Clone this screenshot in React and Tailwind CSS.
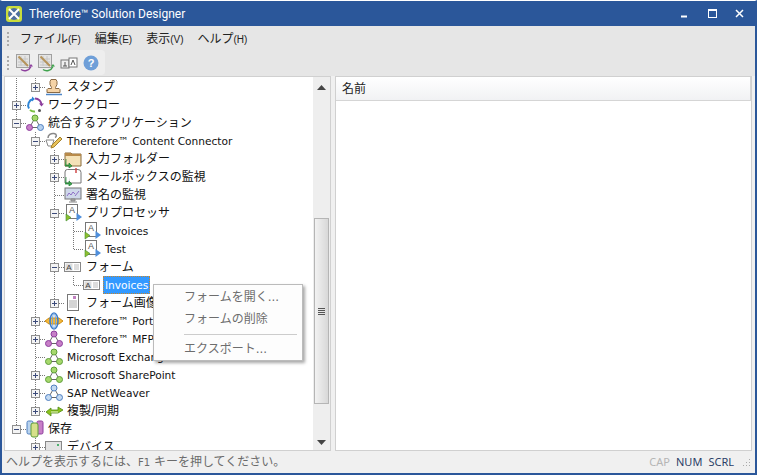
const LATIN = "font-['DejaVu_Sans','Noto_Sans_CJK_JP',sans-serif]";

function Net({ a = '#a6d86c', b = '#5f9e3a', c1, c2 }) {
  const f = c1 || a, s = c2 || b;
  return (
    <svg width="18" height="18" viewBox="0 0 18 18" className="shrink-0">
      <path d="M9 4L3.5 13.5H14.5Z" fill="none" stroke="#666" strokeWidth="1" />
      <circle cx="9" cy="4" r="3" fill={f} stroke={s} />
      <circle cx="3.5" cy="13.5" r="3" fill={f} stroke={s} />
      <circle cx="14.5" cy="13.5" r="3" fill={f} stroke={s} />
    </svg>
  );
}

function IntegrateIcon() {
  return (
    <svg width="18" height="18" viewBox="0 0 18 18" className="shrink-0">
      <path d="M9 4L3.5 13.5H14.5Z" fill="none" stroke="#666" />
      <circle cx="9" cy="4" r="3" fill="#a6d86c" stroke="#5f9e3a" />
      <circle cx="3.5" cy="13.5" r="3" fill="#c77fc7" stroke="#8d3f9d" />
      <circle cx="14.5" cy="13.5" r="3" fill="#b5d0ee" stroke="#4f7fbf" />
    </svg>
  );
}

function Stamp() {
  return (
    <svg width="18" height="18" viewBox="0 0 18 18" className="shrink-0">
      <path d="M6 1.5h5l1 2v3l-1.5 3v1h3.5l1 1v3H2v-3l1-1h3.5v-1L5 6.5v-3Z" fill="#f5d3a6" stroke="#8a6a45" />
      <path d="M1 16.5h16" stroke="#4f86c6" strokeWidth="1.5" />
    </svg>
  );
}

function Workflow() {
  return (
    <svg width="18" height="18" viewBox="0 0 18 18" className="shrink-0" fill="none">
      <path d="M9 2.5A6.5 6.5 0 0 1 15.5 9" stroke="#8d3f9d" strokeWidth="2" />
      <path d="M13 7.5l2.5 3 2.5-3" fill="#8d3f9d" />
      <path d="M3 12.5A6.5 6.5 0 0 1 7 3" stroke="#2f86d6" strokeWidth="2" />
      <path d="M6 .5l3 2.5-3 2.5Z" fill="#2f86d6" />
      <path d="M4 14A6.5 6.5 0 0 0 9 15.5" stroke="#7bc043" strokeWidth="2" />
      <circle cx="13.5" cy="14.5" r="1.5" fill="#555" />
    </svg>
  );
}

function Connector() {
  return (
    <svg width="18" height="18" viewBox="0 0 18 18" className="shrink-0" fill="none">
      <path d="M3 6c0-3 3-5 6-4.500 3 .5 3 3 1 4" stroke="#888" strokeWidth="1.500" />
      <path d="M1 8h8l-2 6H3Z" fill="#fff" stroke="#888" />
      <path d="M7 13l8-8 2 2-8 8-3 1Z" fill="#e8c25a" stroke="#a5822e" />
    </svg>
  );
}

function GreenArrow() {
  return <path d="M2 9v6h3v-2l3 3-3 2v-2H1" fill="#3fa34d" stroke="#1e7d32" strokeWidth=".7" />;
}

function Folder() {
  return (
    <svg width="18" height="18" viewBox="0 0 18 18" className="shrink-0">
      <path d="M1 3h6l1 1h9v12H1Z" fill="#f4e2b8" stroke="#8a6a3a" />
      <path d="M1 3h6l1 1h9v2H1Z" fill="#b88a4a" />
      <GreenArrow />
    </svg>
  );
}

function Mail() {
  return (
    <svg width="18" height="18" viewBox="0 0 18 18" className="shrink-0">
      <path d="M1 4a2.500 2.500 0 0 1 5 0v11H1Z" fill="#fff" stroke="#777" />
      <path d="M3.500 1.500H14a3 3 0 0 1 3 3V15H6" fill="#fff" stroke="#777" />
      <path d="M12 0v5" stroke="#d04a4a" strokeWidth="1.500" />
      <GreenArrow />
    </svg>
  );
}

function Monitor() {
  return (
    <svg width="18" height="18" viewBox="0 0 18 18" className="shrink-0">
      <rect x="1" y="2" width="16" height="11" fill="#cfd8ea" stroke="#777" />
      <path d="M3 10l2-3 2 2 2-3 2 2M11 10l4-5" fill="none" stroke="#8f6fc7" />
      <path d="M7 13h4v2H7ZM5 16h8" fill="#aaa" stroke="#888" />
    </svg>
  );
}

function Process() {
  return (
    <svg width="18" height="18" viewBox="0 0 18 18" className="shrink-0">
      <rect x="2.500" y=".5" width="11" height="14" fill="#fff" stroke="#777" />
      <text x="8" y="9" fontSize="9" fill="#555" textAnchor="middle" fontFamily="Liberation Sans">A</text>
      <path d="M12.500 9l5.500 4-5.500 4Z" fill="#4f8fdc" />
      <path d="M2 10l5 3.500-5 3.500Z" fill="#8fbf2f" stroke="#3f8f2f" strokeWidth=".6" />
    </svg>
  );
}

function FormIcon() {
  return (
    <svg width="18" height="18" viewBox="0 0 18 18" className="shrink-0">
      <rect x=".5" y="4.500" width="16" height="9" fill="#fff" stroke="#888" />
      <rect x="1.500" y="5.500" width="7" height="7" fill="#ddd" />
      <text x="5" y="12" fontSize="8" fill="#444" textAnchor="middle" fontFamily="Liberation Sans">A</text>
      <path d="M10 7h5M10 9h5M10 11h5" stroke="#bbb" />
    </svg>
  );
}

function Page() {
  return (
    <svg width="18" height="18" viewBox="0 0 18 18" className="shrink-0">
      <rect x="3.500" y=".5" width="11" height="16" fill="#fff" stroke="#777" />
      <rect x="9" y="2" width="3" height="3" fill="#c07fc0" />
      <path d="M5 7h8M5 9h8M5 11h8M5 13h8" stroke="#aaa" />
    </svg>
  );
}

function Portal() {
  return (
    <svg width="18" height="18" viewBox="0 0 18 18" className="shrink-0" fill="none">
      <path d="M0 9l4-3h10l4 3-4 3H4Z" fill="#f5b93a" stroke="#cf8d10" />
      <ellipse cx="9" cy="9" rx="4" ry="8" stroke="#3d7cc9" strokeWidth="1.500" />
      <ellipse cx="9" cy="9" rx="1.500" ry="8" stroke="#6fa3dd" />
    </svg>
  );
}

function Sync() {
  return (
    <svg width="18" height="18" viewBox="0 0 18 18" className="shrink-0">
      <path d="M1 10l5-4v2h7V5l5 3-5 3H6v3Z" fill="#8cc21e" stroke="#4f8a10" strokeWidth=".8" />
      <path d="M6 10h7" stroke="#fff" strokeWidth=".8" />
    </svg>
  );
}

function Storage() {
  return (
    <svg width="18" height="18" viewBox="0 0 18 18" className="shrink-0">
      <rect x="1" y="1" width="6" height="13" rx="1.500" fill="#b9d3ee" stroke="#4f7fbf" />
      <rect x="11" y="1" width="6" height="13" rx="1.500" fill="#c77fc7" stroke="#8d3f9d" />
      <rect x="5" y="3" width="7" height="14" rx="2" fill="#d6e08a" stroke="#5f9e3a" />
    </svg>
  );
}

function Device() {
  return (
    <svg width="18" height="18" viewBox="0 0 18 18" className="shrink-0">
      <rect x=".5" y="3.500" width="16" height="13" fill="#e3e3e3" stroke="#888" />
      <rect x="12" y="6" width="2" height="2" fill="#4fb06f" />
    </svg>
  );
}

function ToolEdit({ arc }) {
  return (
    <svg width="18" height="18" viewBox="0 0 18 18" fill="none" className="shrink-0">
      <rect x=".5" y=".5" width="13" height="13" fill="#e4e4e4" stroke="#a0a0a0" />
      <path d="M2 5h10M2 8h10M2 11h10M5 2v10M9 2v10" stroke="#c6c6c6" />
      <path d="M2.500 2.500L12 12" stroke="#b5935a" strokeWidth="2" />
      <path d="M5 15.500c3 2 8 1.500 10-3" stroke={arc} strokeWidth="1.500" />
      <path d="M13 12.500h4l-2 -2.500Z" fill={arc} />
    </svg>
  );
}

function Cell({ through, joint, elbow, box, dashTo = 19 }) {
  return (
    <svg width="19" height="18" viewBox="0 0 19 18" className="shrink-0" shapeRendering="crispEdges">
      {through && <path d="M9.500 0V18" stroke="#777" strokeDasharray="1 1" />}
      {elbow && <path d="M9.500 0V9" stroke="#777" strokeDasharray="1 1" />}
      {(joint || elbow) && <path d={`M9.500 9.500H${dashTo}`} stroke="#777" strokeDasharray="1 1" />}
      {box && (
        <g>
          <rect x="5.500" y="5.500" width="8" height="8" fill="#f4f4f4" stroke="#8f8f8f" />
          <path d="M7 9.500h5" stroke="#3b4a7a" />
          {box === 'plus' && <path d="M9.500 7v5" stroke="#3b4a7a" />}
        </g>
      )}
    </svg>
  );
}

const rows = [
  { t: 'スタンプ', g: [1], k: 'elbow', box: 'plus', I: Stamp },
  { t: 'ワークフロー', g: [], k: 'tee', box: 'plus', I: Workflow },
  { t: '統合するアプリケーション', g: [], k: 'tee', box: 'minus', I: IntegrateIcon },
  { t: 'Therefore™ Content Connector', g: [1], k: 'tee', box: 'minus', I: Connector },
  { t: '入力フォルダー', g: [1, 1], k: 'tee', box: 'plus', I: Folder },
  { t: 'メールボックスの監視', g: [1, 1], k: 'tee', box: 'plus', I: Mail },
  { t: '署名の監視', g: [1, 1], k: 'tee', I: Monitor },
  { t: 'プリプロセッサ', g: [1, 1], k: 'tee', box: 'minus', I: Process },
  { t: 'Invoices', g: [1, 1, 1], k: 'tee', I: Process },
  { t: 'Test', g: [1, 1, 1], k: 'elbow', I: Process },
  { t: 'フォーム', g: [1, 1], k: 'tee', box: 'minus', I: FormIcon },
  { t: 'Invoices', g: [1, 1, 1], k: 'elbow', I: FormIcon, selected: true },
  { t: 'フォーム画像', g: [1, 1], k: 'elbow', box: 'plus', I: Page },
  { t: 'Therefore™ Portal', g: [1], k: 'tee', box: 'plus', I: Portal },
  { t: 'Therefore™ MFP', g: [1], k: 'tee', box: 'plus', I: () => <Net c1="#c77fc7" c2="#8d3f9d" /> },
  { t: 'Microsoft Exchange', g: [1], k: 'tee', I: () => <Net /> },
  { t: 'Microsoft SharePoint', g: [1], k: 'tee', box: 'plus', I: () => <Net /> },
  { t: 'SAP NetWeaver', g: [1], k: 'tee', box: 'plus', I: () => <Net c1="#c4daf2" c2="#4f7fbf" /> },
  { t: '複製/同期', g: [1], k: 'elbow', box: 'plus', I: Sync },
  { t: '保存', g: [], k: 'elbow', box: 'minus', I: Storage },
  { t: 'デバイス', g: [0], k: 'tee', box: 'plus', I: Device },
];

function Row({ r }) {
  const Icon = r.I;
  return (
    <div className="flex h-[18px] shrink-0 items-center whitespace-nowrap">
      {r.g.map((on, i) => <Cell key={i} through={!!on} />)}
      <Cell through={r.k === 'tee'} joint={r.k === 'tee'} elbow={r.k === 'elbow'} box={r.box} />
      <Icon />
      {r.selected ? (
        <span className="ml-[2px] h-[18px] border border-dotted border-[#c9862a] bg-[#3399ff] px-px text-[10.6px] leading-[16px] text-white">{r.t}</span>
      ) : (
        <span className="ml-1 text-[10.6px] leading-[18px] text-[#111]">
          {/^[\x00-\x7f™]+$/.test(r.t) ? r.t : <span className="text-xs">{r.t}</span>}
        </span>
      )}
    </div>
  );
}

function Minimize() {
  return <svg width="12" height="12" viewBox="0 0 12 12"><path d="M1 8.500h6" stroke="#fff" strokeWidth="2" /></svg>;
}

export default function App() {
  return (
    <div className={`flex h-[475px] w-[757px] flex-col overflow-hidden border-x-2 border-t border-b-2 border-x-[#2b579a] border-t-[#fff] border-b-[#2b579a] bg-[#f0f0f0] ${LATIN}`}>
      <div className="flex h-[25px] shrink-0 items-center bg-[#2b579a] pl-[3px]">
        <svg width="18" height="18" viewBox="0 0 18 18" className="shrink-0">
          <rect x="1" y="1" width="16" height="16" rx="3" fill="#c9dc3c" />
          <circle cx="9" cy="9" r="6" fill="#4d6f9f" />
          <path d="M4 4l10 10M14 4L4 14" stroke="#fff" strokeWidth="2" />
        </svg>
        <span className="ml-[6px] pt-[1px] font-['Roboto',sans-serif] text-xs text-white">Therefore™ Solution Designer</span>
        <div className="ml-auto flex items-center gap-[15px] pr-[9px]">
          <Minimize />
          <svg width="12" height="12" viewBox="0 0 12 12" fill="none"><rect x="1.500" y="1.500" width="8" height="8" stroke="#fff" /><path d="M1 2h9" stroke="#fff" strokeWidth="2" /></svg>
          <svg width="12" height="12" viewBox="0 0 12 12" fill="none"><path d="M2 2l7 7M9 2l-7 7" stroke="#fff" strokeWidth="1.500" /></svg>
        </div>
      </div>

      <div className="flex h-[24px] shrink-0 items-center bg-[#e6e6e6] pl-[5px] pt-px text-xs text-[#222]">
        <span className="mr-[11px] h-[14px] w-[2px] border-l-2 border-dotted border-[#aaa]" />
        {[['ファイル', '(F)'], ['編集', '(E)'], ['表示', '(V)'], ['ヘルプ', '(H)']].map(([a, b]) => (
          <span key={a} className="mr-[14px] whitespace-nowrap">{a}<span className="font-['Liberation_Sans',sans-serif] text-[10px]">{b}</span></span>
        ))}
      </div>

      <div className="flex h-[26px] shrink-0 items-start bg-[#e6e6e6]">
        <div className="flex h-[25px] items-center gap-[4px] rounded-r-sm bg-[#eeeeee] pl-[5px] pr-[6px]">
          <span className="mr-[3px] h-[14px] w-[2px] border-l-2 border-dotted border-[#aaa]" />
          <ToolEdit arc="#8d3f9d" />
          <ToolEdit arc="#3fa34d" />
          <svg width="18" height="18" viewBox="0 0 18 18" fill="none" className="shrink-0"><rect x="1" y="6" width="8" height="8" fill="#eee" stroke="#777" /><rect x="9" y="4" width="8" height="9" fill="#fff" stroke="#777" /><path d="M3 12h4M5 8v4M11 11l2-5 2 5" stroke="#555" /></svg>
          <svg width="16" height="16" viewBox="0 0 16 16" className="ml-[1px] shrink-0"><circle cx="8" cy="8" r="7.500" fill="#6f9fd8" /><text x="8" y="12" fontSize="11" fontWeight="700" textAnchor="middle" fill="#fff" fontFamily="Liberation Sans">?</text></svg>
        </div>
      </div>

      <div className="flex min-h-0 flex-1 gap-[4px] pl-[2px] pr-[3px]">
        <div className="flex min-w-0 w-[327px] border border-[#d0d0d0] bg-white">
          <div className="flex min-w-0 flex-1 flex-col overflow-hidden pl-[2px] pt-px">
            {rows.map((r, i) => <Row key={i} r={r} />)}
          </div>
          <div className="flex w-[17px] shrink-0 flex-col items-center bg-[#eeeeee]">
            <div className="flex h-[20px] shrink-0 items-center"><svg width="9" height="5" viewBox="0 0 9 5"><path d="M4.500 0L9 5H0Z" fill="#444" /></svg></div>
            <div className="mt-[121px] flex h-[186px] w-[15px] shrink-0 flex-col items-center justify-center gap-px border border-[#b5b5b5] bg-gradient-to-r from-[#f2f2f2] to-[#d8d8d8]">
              <span className="h-px w-[7px] bg-[#555]" /><span className="h-px w-[7px] bg-[#555]" /><span className="h-px w-[7px] bg-[#555]" /><span className="h-px w-[7px] bg-[#555]" />
            </div>
            <div className="mt-auto flex h-[16px] shrink-0 items-center"><svg width="9" height="5" viewBox="0 0 9 5"><path d="M4.500 5L9 0H0Z" fill="#444" /></svg></div>
          </div>
        </div>
        <div className="flex min-w-0 flex-1 flex-col border border-[#d0d0d0] bg-white">
          <div className="flex h-[24px] shrink-0 items-center border-b border-r border-[#d5d5d5] bg-gradient-to-b from-white to-[#f1f2f4] pl-[6px] pt-px text-xs text-[#222]">名前</div>
        </div>
      </div>

      <div className="flex h-[22px] shrink-0 items-center pl-[4px] pr-[4px] text-xs text-[#6b6b6b]">
        <span className="whitespace-nowrap">ヘルプを表示するには、<span className="text-[10px]">F1</span> キーを押してください。</span>
        <div className="ml-auto flex items-center gap-[6px] font-['Noto_Sans',sans-serif] text-[11px]">
          <span className="text-[#b5b5b5]">CAP</span>
          <span className="text-[#2c3e66]">NUM</span>
          <span className="text-[#2c3e66]">SCRL</span>
          <svg width="10" height="10" viewBox="0 0 10 10" className="ml-px"><path d="M8 2h1v1H8ZM5 5h1v1H5ZM8 5h1v1H8ZM2 8h1v1H2ZM5 8h1v1H5ZM8 8h1v1H8Z" fill="#aaa" /></svg>
        </div>
      </div>

      <div className="absolute left-[153px] top-[284px] flex h-[77px] w-[150px] flex-col border border-[#bbbbbb] bg-[#fdfdfd] pl-[30px] pt-[1px] text-xs text-[#6d6d6d] shadow-[2px_2px_3px_rgba(0,0,0,0.35)]">
        <div className="flex h-[22px] items-center">フォームを開く...</div>
        <div className="flex h-[22px] items-center">フォームの削除</div>
        <div className="mr-[5px] mt-[5px] h-px bg-[#cccccc]" />
        <div className="mt-[3px] flex h-[22px] items-center">エクスポート...</div>
      </div>
    </div>
  );
}
